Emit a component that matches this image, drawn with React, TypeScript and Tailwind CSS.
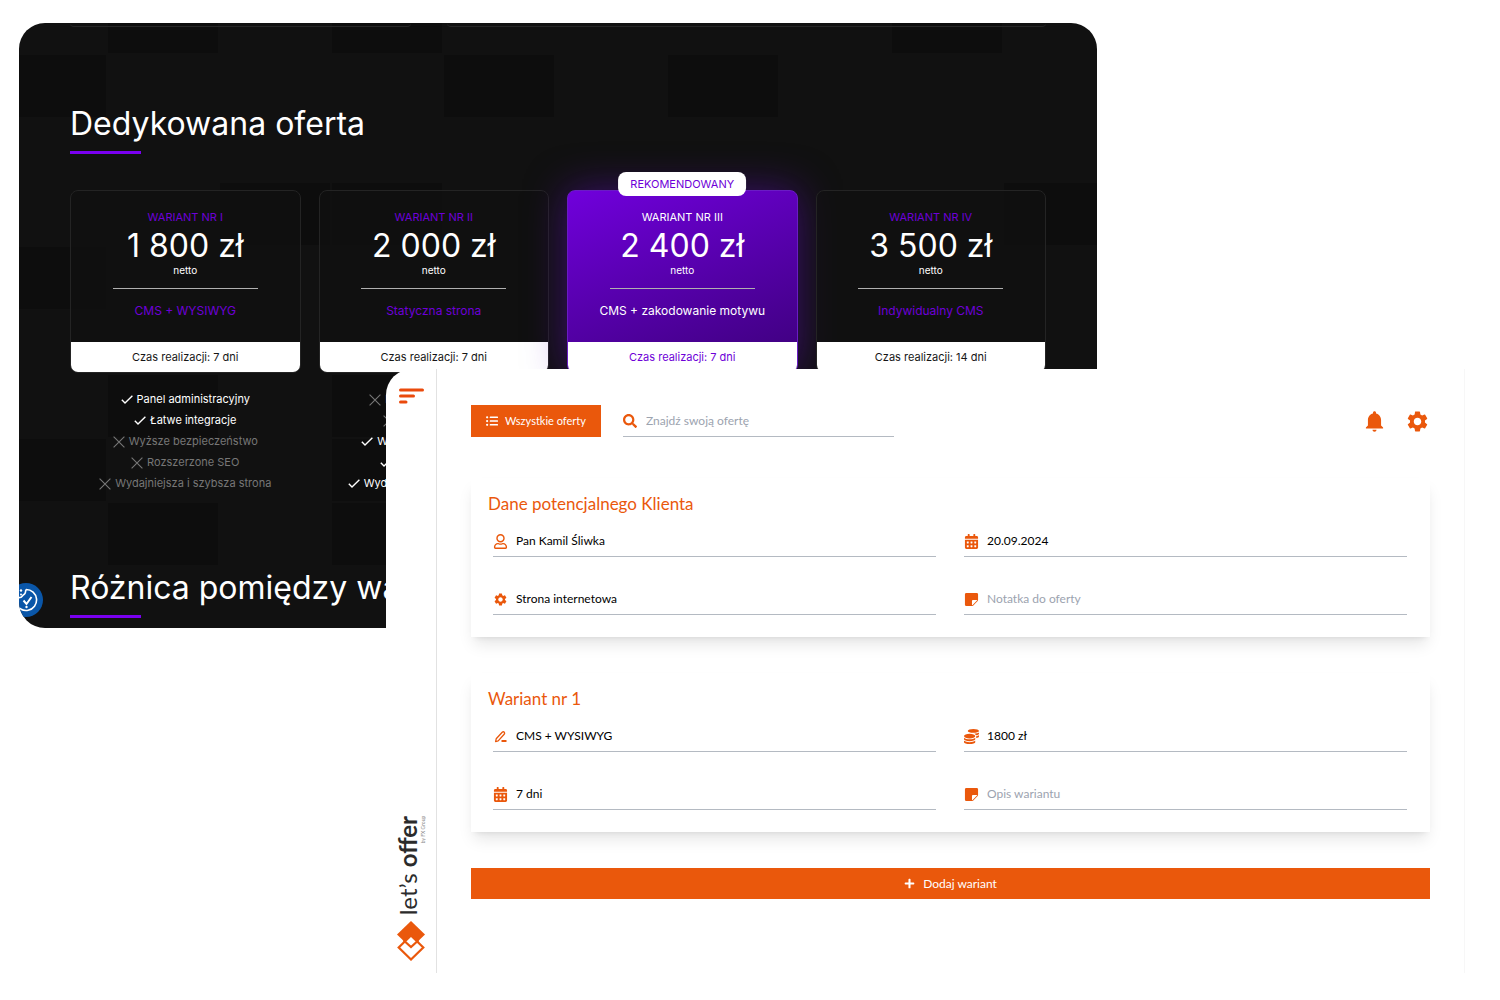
import { useState } from "react";
import type { ComponentType } from "react";
import { BsStickyFill } from "react-icons/bs";
import { FaCalendarAlt, FaCoins, FaListUl, FaPlus, FaRegUser, FaSearch } from "react-icons/fa";
import { IoMdNotifications } from "react-icons/io";
import { MdSettings } from "react-icons/md";

type Variant = {
  name: string;
  price: string;
  title: string;
  time: string;
  recommended?: boolean;
  included: boolean[];
};

const features = [
  "Panel administracyjny",
  "Łatwe integracje",
  "Wyższe bezpieczeństwo",
  "Rozszerzone SEO",
  "Wydajniejsza i szybsza strona",
];

const variants: Variant[] = [
  {
    name: "WARIANT NR I",
    price: "1 800 zł",
    title: "CMS + WYSIWYG",
    time: "7 dni",
    included: [true, true, false, false, false],
  },
  {
    name: "WARIANT NR II",
    price: "2 000 zł",
    title: "Statyczna strona",
    time: "7 dni",
    included: [false, false, true, true, true],
  },
  {
    name: "WARIANT NR III",
    price: "2 400 zł",
    title: "CMS + zakodowanie motywu",
    time: "7 dni",
    recommended: true,
    included: [true, true, true, true, true],
  },
  {
    name: "WARIANT NR IV",
    price: "3 500 zł",
    title: "Indywidualny CMS",
    time: "14 dni",
    included: [true, true, true, true, true],
  },
];

// "x" is a darker tile, "." is the plain background
const tiles = [
  ".x.x....x.",
  "x...x.x...",
  "..........",
  "..xx.....x",
  "x.........",
  "..........",
  ".x.x......",
  "x..x......",
  ".x.x......",
  "..........",
];

function Tiles() {
  return (
    <div
      className="absolute inset-0 grid grid-cols-[89px_repeat(9,112px)] grid-rows-[32px_repeat(9,64px)] overflow-hidden"
      aria-hidden="true"
    >
      {tiles.join("").split("").map((tile, i) => (
        <div key={i} className={tile === "x" ? "mr-0.5 mb-0.5 bg-[#0d0d0d]" : ""} />
      ))}
    </div>
  );
}

function CheckIcon() {
  return (
    <svg className="h-3 w-3 shrink-0" viewBox="0 0 12 12" fill="none" stroke="currentColor" strokeWidth="1.4">
      <path d="M0.8 5.8 4 9 11.4 1.8" />
    </svg>
  );
}

function CrossIcon() {
  return (
    <svg className="h-3 w-3 shrink-0" viewBox="0 0 12 12" fill="none" stroke="currentColor" strokeWidth="1.1">
      <path d="M0.6 0.6 11.4 11.4M11.4 0.6 0.6 11.4" />
    </svg>
  );
}

function PencilIcon({ className }: { className?: string }) {
  return (
    <svg className={className} viewBox="0 0 15 15" fill="none" stroke="currentColor">
      <path d="M2.6 12.6 3.200 9.800 9.200 3.200Q10.300 2.200 11.300 3.200 12.100 4.200 11.200 5.300L5.200 11.900Z" strokeWidth="1.300" strokeLinejoin="round" />
      <path d="M8.500 12H13.500" strokeWidth="2" />
    </svg>
  );
}

function SectionTitle({ children }: { children: string }) {
  return (
    <>
      <h2 className="text-[32px] leading-10 whitespace-nowrap text-white">{children}</h2>
      <div className="mt-[7px] h-[3px] w-[71px] bg-[#7a00f0]" />
    </>
  );
}

function VariantCard({ variant }: { variant: Variant }) {
  const accent = variant.recommended ? "text-white" : "text-[#6e00d8]";

  return (
    <div className="text-center">
      <div
        className={
          variant.recommended
            ? "relative rounded-lg border border-[#6a1cc4] bg-linear-160 from-[#7000dc] to-[#3c007a] shadow-[0_0_40px_rgba(100,10,200,0.5)]"
            : "relative rounded-lg border border-[#242424] bg-[#101010]/60"
        }
      >
        {variant.recommended && (
          <span className="absolute -top-[19px] left-1/2 -translate-x-1/2 rounded-lg bg-white px-3 text-[11px] leading-6 text-[#6e00d8]">
            REKOMENDOWANY
          </span>
        )}
        <h3 className={`pt-[18px] text-[11px] leading-4 ${accent}`}>{variant.name}</h3>
        <p className="mt-[3px] text-[32px] leading-9 text-white">{variant.price}</p>
        <p className="text-[10px] leading-3 text-white">netto</p>
        <div className="mx-auto mt-3 h-px w-[145px] bg-[#b0b0b0]" />
        <p className={`mt-3 text-[12px] leading-5 ${accent}`}>{variant.title}</p>
        <p
          className={`mt-[21px] rounded-b-[7px] bg-white text-[11px] leading-[30px] ${
            variant.recommended ? "text-[#6e00d8]" : "text-[#161616]"
          }`}
        >
          Czas realizacji: {variant.time}
        </p>
      </div>
      <ul className="mt-4 text-[11px] leading-[21px]">
        {features.map((feature, i) => (
          <li
            key={feature}
            className={`flex items-center justify-center gap-1 whitespace-nowrap ${
              variant.included[i] ? "text-white" : "text-[#777777]"
            }`}
          >
            {variant.included[i] ? <CheckIcon /> : <CrossIcon />}
            {feature}
          </li>
        ))}
      </ul>
    </div>
  );
}

function CookieButton() {
  return (
    <button
      type="button"
      aria-label="Ustawienia cookies"
      className="absolute bottom-[11px] -left-2.5 h-[34px] w-[34px] rounded-full bg-[#0a56a8] text-white"
    >
      <svg className="h-full w-full" viewBox="0 0 34 34" fill="none" stroke="currentColor" strokeWidth="1.6">
        <path d="M17 6.5a10.5 10.5 0 1 1-10 13.5M17 6.5c-1 3 0 4-2 5s-2 3-4 3-3 1-4.500 0" />
        <path d="M14.500 17.500l3 3.500 5-7" strokeWidth="2" />
        <circle cx="12" cy="7.500" r="1.200" fill="currentColor" stroke="none" />
        <circle cx="12" cy="11.500" r="1" fill="currentColor" stroke="none" />
        <circle cx="17.500" cy="24" r="1.200" fill="currentColor" stroke="none" />
      </svg>
    </button>
  );
}

function OfferPreview() {
  return (
    <section className="relative mt-[23px] mr-[403px] ml-[19px] overflow-hidden rounded-[26px] bg-[#111111] font-['Inter',sans-serif]">
      <Tiles />
      <div className="relative px-[51px] pb-2.5">
        <div className="flex h-1 gap-9">
          <div className="w-[341px] rounded-b-lg border-b border-[#262626]" />
          <div className="flex-1 rounded-b-lg border-b border-[#262626]" />
        </div>
        <div className="mt-[77px]">
          <SectionTitle>Dedykowana oferta</SectionTitle>
        </div>
        <div className="mt-9 grid grid-cols-4 gap-[18px]">
          {variants.map((variant) => (
            <VariantCard key={variant.name} variant={variant} />
          ))}
        </div>
        <div className="mt-[74px]">
          <SectionTitle>Różnica pomiędzy wariantami</SectionTitle>
        </div>
      </div>
      <CookieButton />
    </section>
  );
}

type FieldProps = {
  id: string;
  label: string;
  icon: ComponentType<{ className?: string }>;
  initial?: string;
};

function Field({ id, label, icon: Icon, initial = "" }: FieldProps) {
  const [value, setValue] = useState(initial);

  return (
    <div className="flex h-[31px] items-center border-b border-[#b4bac2]">
      <label htmlFor={id} aria-label={label} className="flex w-[23px] shrink-0">
        <Icon className="h-[15px] w-[15px] text-[#ea580c]" />
      </label>
      <input
        id={id}
        value={value}
        placeholder={label}
        onChange={(e) => setValue(e.target.value)}
        className="w-full min-w-0 bg-transparent text-[12px] text-black outline-none placeholder:text-[#9ca3af]"
      />
    </div>
  );
}

function FormCard({ title, fields }: { title: string; fields: FieldProps[] }) {
  return (
    <section className="bg-white pt-4 pr-[23px] pb-[22px] pl-[22px] shadow-lg">
      <h2 className="-ml-[5px] text-[17px] leading-5 text-[#ea580c]">{title}</h2>
      <div className="mt-3 grid grid-cols-2 gap-x-7 gap-y-[27px]">
        {fields.map((field) => (
          <Field key={field.id} {...field} />
        ))}
      </div>
    </section>
  );
}

const clientFields: FieldProps[] = [
  { id: "client", label: "Klient", icon: FaRegUser, initial: "Pan Kamil Śliwka" },
  { id: "date", label: "Data", icon: FaCalendarAlt, initial: "20.09.2024" },
  { id: "type", label: "Rodzaj oferty", icon: MdSettings, initial: "Strona internetowa" },
  { id: "note", label: "Notatka do oferty", icon: BsStickyFill },
];

const variantFields: FieldProps[] = [
  { id: "variant-name", label: "Nazwa wariantu", icon: PencilIcon, initial: "CMS + WYSIWYG" },
  { id: "variant-price", label: "Cena", icon: FaCoins, initial: "1800 zł" },
  { id: "variant-time", label: "Czas realizacji", icon: FaCalendarAlt, initial: "7 dni" },
  { id: "variant-note", label: "Opis wariantu", icon: BsStickyFill },
];

function Sidebar() {
  return (
    <aside className="flex w-[51px] shrink-0 flex-col items-center justify-between border-r border-[#e2e2e2] pt-[19px] pb-3">
      <button type="button" aria-label="Menu">
        <svg className="h-4 w-[25px]" viewBox="0 0 25 16" fill="none" stroke="#ea4a0c" strokeWidth="3" strokeLinecap="round">
          <path d="M1.500 2H23.500M1.500 8H14.500M1.500 14H7" />
        </svg>
      </button>
      <div className="flex flex-col items-center gap-1.5">
        <div className="flex rotate-180 flex-col items-end [writing-mode:vertical-rl]">
          <div className="text-[24px] leading-6 text-[#2b2b2b]">
            let’s <b>offer</b>
          </div>
          <div className="text-[5px] leading-[6px] text-[#888888]">by FX Group</div>
        </div>
        <svg className="h-10 w-7" viewBox="0 0 28 40" fill="none" stroke="#ea580c" strokeWidth="2.200">
          <path d="M14 0 28 13.500 14 27 0 13.500Z" fill="#ea580c" stroke="none" />
          <path d="M14 14.500 26.300 26.500 14 38.500 1.700 26.500Z" fill="#ffffff" />
          <path d="M6.500 19.200 14 26 21.500 19.200" />
        </svg>
      </div>
    </aside>
  );
}

function OfferEditor() {
  return (
    <div className="relative -mt-[259px] mr-[35px] ml-[386px] flex min-h-[604px] rounded-tl-[26px] border-r border-[#f7f7f7] bg-white font-['Lato',sans-serif]">
      <Sidebar />
      <main className="min-w-0 flex-1 px-[34px] pt-9">
        <header className="flex h-8 items-center">
          <button type="button" className="flex h-8 w-[130px] items-center justify-center gap-[7px] bg-[#ea580c] text-[11px] text-white">
            <FaListUl className="h-3 w-3" />
            Wszystkie oferty
          </button>
          <div className="ml-[22px] flex h-[31px] w-[271px] items-center border-b border-[#b4bac2]">
            <label htmlFor="search" aria-label="Szukaj" className="flex w-[23px] shrink-0">
              <FaSearch className="h-3.5 w-3.5 text-[#ea580c]" />
            </label>
            <input
              id="search"
              type="search"
              placeholder="Znajdź swoją ofertę"
              className="w-full min-w-0 bg-transparent text-[12px] outline-none placeholder:text-[#9ca3af]"
            />
          </div>
          <div className="ml-auto flex gap-[18px] text-[#ea580c]">
            <button type="button" aria-label="Powiadomienia">
              <IoMdNotifications className="h-[25px] w-[25px]" />
            </button>
            <button type="button" aria-label="Ustawienia">
              <MdSettings className="h-[25px] w-[25px]" />
            </button>
          </div>
        </header>
        <form className="mt-[41px] flex flex-col gap-9" onSubmit={(e) => e.preventDefault()}>
          <FormCard title="Dane potencjalnego Klienta" fields={clientFields} />
          <FormCard title="Wariant nr 1" fields={variantFields} />
          <button type="submit" className="flex h-[31px] items-center justify-center gap-2 bg-[#ea580c] text-[12px] text-white">
            <FaPlus className="h-[11px] w-[11px]" />
            Dodaj wariant
          </button>
        </form>
      </main>
    </div>
  );
}

export default function App() {
  return (
    <div className="flow-root min-h-screen bg-white">
      <OfferPreview />
      <OfferEditor />
    </div>
  );
}
